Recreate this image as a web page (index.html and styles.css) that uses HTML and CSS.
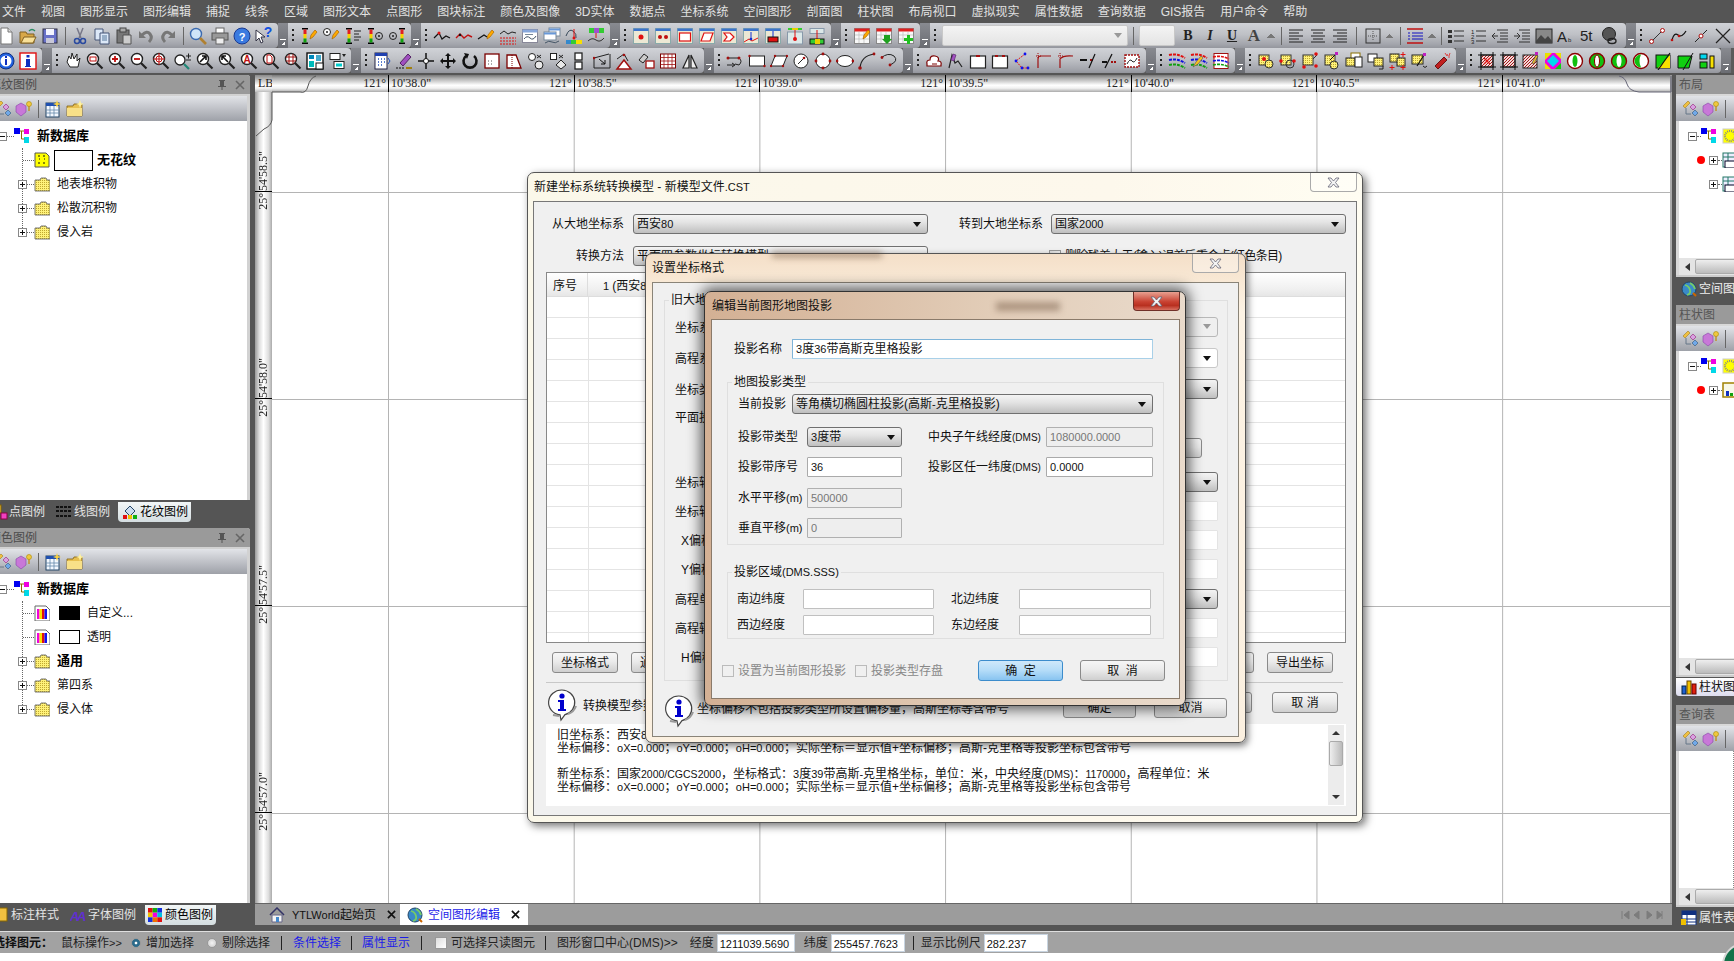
FILE: index.html
```html
<!DOCTYPE html>
<html lang="zh-CN">
<head>
<meta charset="utf-8">
<title>YTLWorld</title>
<link rel="stylesheet" href="styles.css">
</head>
<body>
<svg class="sprite" aria-hidden="true"><defs>
<pattern id="hy" width="2" height="2" patternUnits="userSpaceOnUse"><rect width="2" height="2" fill="#fff27a"/><rect width="1" height="1" fill="#c0a830"/></pattern>
<pattern id="hr" width="3" height="3" patternUnits="userSpaceOnUse"><rect width="3" height="3" fill="#f4d8d8"/><path d="M0 3L3 0" stroke="#a01818"/></pattern>
<g id="mag"><circle cx="7" cy="7" r="5.5" fill="#fff" stroke="#222" stroke-width="1.4"/><path d="M11 11l5.500 5.500" stroke="#222" stroke-width="2.200"/></g>
<g id="bar"><path d="M2 1h6v1.500H2zM2 15.500h6V17H2z" fill="#000"/><rect x="3.500" y="2.500" width="3" height="4.500" fill="#e02020"/><rect x="3.500" y="7" width="3" height="4.500" fill="#f8d000"/><rect x="3.500" y="11.500" width="3" height="4" fill="#10a010"/></g>
<g id="pen"><path d="M10 12l1-4 4-5 2 2-4 5z" fill="#fa0" stroke="#a60" stroke-width=".7"/></g>
<g id="tile"><rect x="1.500" y="1.500" width="15" height="15" fill="#ece8d4" stroke="#8aa"/><rect x="1.500" y="1.500" width="15" height="2.500" fill="#3c74cc"/></g>
<g id="win"><rect x="1.500" y="2.500" width="15" height="13" fill="#fff" stroke="#889"/><rect x="1.500" y="2.500" width="15" height="3" fill="#88a8dc"/></g>
<g id="cal"><rect x="1.500" y="1.500" width="15" height="15" fill="#f8f8f8" stroke="#888"/><path d="M1.500 3h15" stroke="#e02020" stroke-width="3"/><path d="M6 5v11M11 5v11M2 8h14M2 12h14" stroke="#bbb" stroke-width=".7"/></g>
<g id="yb"><rect x="2" y="3" width="10" height="10" fill="url(#hy)" stroke="#333"/></g>
<g id="ring"><circle cx="9" cy="9" r="7.500" fill="#fff" stroke="#8a0000" stroke-width="1.400"/></g>
<g id="dia"><path d="M1 6l5-5 2 2-5 5z" fill="#f0c040" stroke="#a08020" stroke-width=".6"/><path d="M8 7l3-3 3 3-3 3z" fill="#d8a0e0" stroke="#806" stroke-width=".5"/><path d="M10 13l3-3 3 3-3 3z" fill="#70a8e8" stroke="#246" stroke-width=".5"/><path d="M4 8v6h5" fill="none" stroke="#678"/></g>
<g id="gem"><path d="M6 3l5 3v6l-5 4-5-4V6z" fill="#c878d8" stroke="#84a" stroke-width=".6"/><circle cx="14" cy="4" r="2.500" fill="#f0c840" stroke="#a80" stroke-width=".6"/><path d="M14 6v5" stroke="#c09020" stroke-width="1.400"/></g>
<g id="ptb"><rect x="2" y="3" width="13" height="14" fill="#f4f8ff" stroke="#246"/><rect x="2" y="3" width="13" height="3" fill="#2050b0"/><path d="M6 6v11M10 6v11M2 10h13M2 13h13" stroke="#68a" stroke-width=".8"/><path d="M13 0l1 3 3 1-3 1-1 3-1-3-3-1 3-1z" fill="#f8d040"/></g>
<g id="pfo"><path d="M1 6h6l1-2h8v12H1z" fill="#e8c050" stroke="#806010" stroke-width=".8"/><path d="M1 8h15v8H1z" fill="#f8e088"/><path d="M14 0l1 3 3 1-3 1-1 3-1-3-3-1 3-1z" fill="#fff2a0"/></g>
<g id="root"><rect x="0" y="0" width="6" height="6" fill="#0000f0"/><rect x="10" y="1" width="5" height="5" fill="#f000e0"/><rect x="10" y="9" width="5" height="6" fill="#00d8e8"/><path d="M6 3h4M7.500 3v8h3" fill="none" stroke="#8a7000"/></g>
<g id="fold"><path d="M1 4h5l1-2h5l1 2h3v11H1z" fill="url(#hy)" stroke="#555" stroke-width=".8"/></g>
<g id="cbar"><path d="M1 1h11l4 4v11H1z" fill="#fff" stroke="#666"/><rect x="3" y="4" width="2.500" height="10" fill="#f000e0"/><rect x="5.500" y="4" width="2.500" height="10" fill="#f8e000"/><rect x="8" y="4" width="2.500" height="10" fill="#e01010"/><rect x="10.500" y="4" width="2.500" height="10" fill="#1010f0"/></g>
<g id="globe"><circle cx="8" cy="8" r="7" fill="#3a8ac8" stroke="#246"/><path d="M4 4q4 1 5 5t-3 5M9 2q4 2 5 6" fill="none" stroke="#7c6" stroke-width="1.800"/><path d="M12 12l3 3" stroke="#c60" stroke-width="2"/></g>
<g id="x"><path d="M2 1h3l2.500 3L10 1h3l-3.500 4.500L13 10h-3L7.500 7 5 10H2l3.500-4.500z" fill="#f4f4f4" stroke="#667" stroke-width=".8"/></g>
<g id="info"><path d="M16 2a13 12.500 0 0 1 3 24.600L15 32l-1-5.100A13 12.500 0 0 1 16 2z" fill="#fff" stroke="#444" stroke-width="1.200"/><path d="M7 27l6 1M22 26q6-2 8-8" stroke="#999" stroke-width="2" fill="none"/><circle cx="16" cy="8" r="2.600" fill="#00c"/><path d="M12 12h6v9h2v2h-8v-2h2v-7h-2z" fill="#00c"/></g>
</defs></svg>

<nav class="menu"><span>文件</span><span>视图</span><span>图形显示</span><span>图形编辑</span><span>捕捉</span><span>线条</span><span>区域</span><span>图形文本</span><span>点图形</span><span>图块标注</span><span>颜色及图像</span><span>3D实体</span><span>数据点</span><span>坐标系统</span><span>空间图形</span><span>剖面图</span><span>柱状图</span><span>布局视口</span><span>虚拟现实</span><span>属性数据</span><span>查询数据</span><span>GIS报告</span><span>用户命令</span><span>帮助</span></nav>

<div class="tbar">
 <div class="grp first">
  <svg class="i" viewBox="0 0 18 18"><path d="M4 1h7l4 4v12H4z" fill="#fff" stroke="#777"/><path d="M11 1v4h4" fill="#ddd" stroke="#777"/></svg>
  <svg class="i" viewBox="0 0 18 18"><path d="M1 5h6l1 2h7v9H1z" fill="#d8a848" stroke="#806020"/><path d="M2 16l3-6h12l-3 6z" fill="#f8e098" stroke="#806020"/><path d="M10 4q3-3 6 0" stroke="#2a8a60" fill="none" stroke-width="1.400"/></svg>
  <svg class="i" viewBox="0 0 18 18"><rect x="2" y="2" width="14" height="14" fill="#6870c8" stroke="#334"/><rect x="5" y="2" width="8" height="6" fill="#f4f4ff"/><rect x="5" y="11" width="8" height="5" fill="#c8c8d8"/></svg>
  <i class="sep"></i>
  <svg class="i" viewBox="0 0 18 18"><path d="M6 1l4 10M12 1L8 11" stroke="#778" stroke-width="1.500"/><circle cx="6" cy="14" r="2.500" fill="none" stroke="#2a4aa0" stroke-width="1.500"/><circle cx="12" cy="14" r="2.500" fill="none" stroke="#2a4aa0" stroke-width="1.500"/></svg>
  <svg class="i" viewBox="0 0 18 18"><path d="M2 2h8v11H2z" fill="#dce8f8" stroke="#457"/><path d="M7 6h9v11H7z" fill="#dce8f8" stroke="#457"/><path d="M9 9h5M9 11h5M9 13h5" stroke="#579"/></svg>
  <svg class="i" viewBox="0 0 18 18"><rect x="2" y="3" width="12" height="13" fill="#777" stroke="#444"/><rect x="5" y="1" width="6" height="4" fill="#aaa" stroke="#444"/><path d="M8 8h8v9H8z" fill="#ccc" stroke="#555"/></svg>
  <svg class="i" viewBox="0 0 18 18"><path d="M5 8q5-5 8-1 3 4-1 8" stroke="#777" stroke-width="3" fill="none"/><path d="M2 4v7h7z" fill="#777"/></svg>
  <svg class="i" viewBox="0 0 18 18"><path d="M13 8q-5-5-8-1-3 4 1 8" stroke="#777" stroke-width="3" fill="none"/><path d="M16 4v7H9z" fill="#777"/></svg>
  <i class="sep"></i>
  <svg class="i" viewBox="0 0 18 18"><circle cx="7" cy="7" r="5.500" fill="#cfe4f8" stroke="#3a6ab0" stroke-width="1.400"/><path d="M11 11l6 6" stroke="#b08030" stroke-width="2.600"/></svg>
  <svg class="i" viewBox="0 0 18 18"><rect x="5" y="1" width="8" height="6" fill="#fff" stroke="#666"/><rect x="1" y="6" width="16" height="7" fill="#999" stroke="#555"/><rect x="5" y="11" width="8" height="6" fill="#eee" stroke="#666"/></svg>
  <svg class="i" viewBox="0 0 18 18"><circle cx="9" cy="9" r="8" fill="#3a7ae0" stroke="#1a3a90"/><text x="9" y="13.500" class="svt w">?</text></svg>
  <svg class="i" viewBox="0 0 18 18"><path d="M1 3v11l3-3 2 5 2-1-2-5h4z" fill="#fff" stroke="#334"/><text x="13" y="10" class="svt bl">?</text></svg>
 </div><div class="more"></div>
 <div class="grp"><i class="gr"></i>
  <svg class="i" viewBox="0 0 18 18"><use href="#bar"/><use href="#pen"/></svg>
  <svg class="i" viewBox="0 0 18 18"><circle cx="5" cy="5" r="3.500" fill="#fff" stroke="#222"/><circle cx="5" cy="5" r="1" fill="#222"/><use href="#pen"/></svg>
  <svg class="i" viewBox="0 0 18 18"><use href="#bar"/><path d="M10 4h7M10 7h5M10 10h7M10 13h5" stroke="#222"/></svg>
  <svg class="i" viewBox="0 0 18 18"><use href="#bar"/><circle cx="13" cy="9" r="3.500" fill="none" stroke="#222"/><circle cx="13" cy="9" r="1" fill="#222"/></svg>
  <svg class="i" viewBox="0 0 18 18"><circle cx="5" cy="9" r="3.500" fill="none" stroke="#222"/><circle cx="5" cy="9" r="1" fill="#222"/><use href="#bar" x="9"/></svg>
 </div><div class="more"></div>
 <div class="grp"><i class="gr"></i>
  <svg class="i" viewBox="0 0 18 18"><path d="M1 11l5-5 3 6 4-3 4 2" fill="none" stroke="#111" stroke-width="1.200"/><circle cx="6" cy="6" r="1.500" fill="#e01010"/></svg>
  <svg class="i" viewBox="0 0 18 18"><path d="M1 11l4-4 4 4 4-3 4 2" fill="none" stroke="#c01010" stroke-width="1.400"/><circle cx="5" cy="8" r="1.200" fill="#111"/></svg>
  <svg class="i" viewBox="0 0 18 18"><path d="M1 12l6-4 3 2" fill="none" stroke="#111" stroke-width="1.200"/><use href="#pen"/></svg>
  <svg class="i" viewBox="0 0 18 18"><path d="M1 7l4-3 4 3 4-2 4 1" fill="none" stroke="#222"/><path d="M1 11h16M1 14h16M1 17h16" stroke="#e01010" stroke-dasharray="2 1"/></svg>
  <svg class="i" viewBox="0 0 18 18"><use href="#win"/><path d="M3 12q3-4 6-1t6-2" fill="none" stroke="#456"/><path d="M4 7.500h8" stroke="#789"/></svg>
  <svg class="i" viewBox="0 0 18 18"><rect x="6" y="1" width="11" height="8" fill="#fff" stroke="#789"/><path d="M6 2.500h11" stroke="#6898d8" stroke-width="2"/><rect x="1" y="5" width="12" height="8" fill="#fff" stroke="#789"/><path d="M1 6.500h12" stroke="#6898d8" stroke-width="2"/><path d="M2 16q4-3 7-1t7-1" fill="none" stroke="#456"/></svg>
  <svg class="i" viewBox="0 0 18 18"><path d="M1 9q3-8 7-5t3 7" fill="none" stroke="#345"/><path d="M9 2v9" stroke="#e01010"/><circle cx="9" cy="11" r="1.500" fill="#e01010"/><rect x="1" y="13" width="5" height="4" fill="#38c"/><rect x="6" y="13" width="5" height="4" fill="#3c3"/><rect x="11" y="13" width="6" height="4" fill="#f8e000"/></svg>
  <svg class="i" viewBox="0 0 18 18"><rect x="2" y="1" width="5" height="5" fill="#3c3"/><rect x="7" y="1" width="5" height="5" fill="#a050d0"/><rect x="12" y="1" width="5" height="5" fill="#3c3"/><path d="M9 6v5" stroke="#e01010"/><path d="M1 14q4-4 8-1t8-2" fill="none" stroke="#333"/></svg>
 </div><div class="more"></div>
 <div class="grp"><i class="gr"></i>
  <svg class="i" viewBox="0 0 18 18"><use href="#tile"/><circle cx="9" cy="10" r="2.500" fill="#e01010"/></svg>
  <svg class="i" viewBox="0 0 18 18"><use href="#tile"/><circle cx="6" cy="10" r="2" fill="#c01010"/><circle cx="12" cy="10" r="2" fill="#c01010"/></svg>
  <svg class="i" viewBox="0 0 18 18"><use href="#tile"/><rect x="3.500" y="6" width="11" height="8" fill="#fff" stroke="#e01010" stroke-width="1.200"/></svg>
  <svg class="i" viewBox="0 0 18 18"><use href="#tile"/><path d="M6 6h9l-3 8H3z" fill="#fff" stroke="#e01010" stroke-width="1.200"/></svg>
  <svg class="i" viewBox="0 0 18 18"><use href="#tile"/><path d="M4 6h6l4 4-4 4H4l3-4z" fill="#fff" stroke="#e01010" stroke-width="1.200"/></svg>
  <svg class="i" viewBox="0 0 18 18"><use href="#tile"/><path d="M2 15l5-3 3 2 6-3" fill="none" stroke="#e01010"/><path d="M9 5v8" stroke="#1030d0"/><circle cx="9" cy="12" r="1.300" fill="#1030d0"/></svg>
  <svg class="i" viewBox="0 0 18 18"><use href="#tile"/><path d="M9 4v6" stroke="#1030d0"/><rect x="4" y="10" width="10" height="5" fill="#e01010" stroke="#111"/></svg>
  <svg class="i" viewBox="0 0 18 18"><rect x="2" y="1" width="14" height="2" fill="#3c3"/><rect x="6" y="1" width="6" height="2" fill="#e8d000"/><rect x="1.500" y="5" width="15" height="12" fill="#dce8e8" stroke="#89a"/><path d="M9 3v9" stroke="#e01010"/><circle cx="9" cy="12" r="2" fill="#e01010"/></svg>
  <svg class="i" viewBox="0 0 18 18"><rect x="2" y="1.500" width="14" height="5" fill="#dce8e8" stroke="#89a"/><path d="M9 3v9" stroke="#e01010"/><rect x="2" y="12" width="14" height="5" fill="#3c3" stroke="#111"/><rect x="7" y="12" width="5" height="5" fill="#e8d000"/></svg>
 </div><div class="more"></div>
 <div class="grp"><i class="gr"></i>
  <svg class="i" viewBox="0 0 18 18"><use href="#cal"/><use href="#pen"/></svg>
  <svg class="i" viewBox="0 0 18 18"><use href="#cal"/><path d="M9 8h6v4h2l-5 5-5-5h2z" fill="#20a020"/></svg>
  <svg class="i" viewBox="0 0 18 18"><use href="#cal"/><path d="M10 8h3v3h3v3h-3v3h-3v-3H7v-3h3z" fill="#20c020"/></svg>
 </div><div class="more"></div>
 <div class="grp wide"><i class="gr"></i>
  <div class="tcombo big"><i class="arr lt"></i></div><i class="sep lg"></i>
  <div class="tcombo small"></div>
  <b class="fmt ser">B</b><i class="fmt it ser">I</i><u class="fmt ser">U</u><span class="fmt fa ser">A</span><i class="dd"></i><i class="sep"></i>
  <svg class="i" viewBox="0 0 18 18"><path d="M2 3h14M2 6h10M2 9h14M2 12h10M2 15h14" stroke="#222"/></svg>
  <svg class="i" viewBox="0 0 18 18"><path d="M2 3h14M4 6h10M2 9h14M4 12h10M2 15h14" stroke="#222"/></svg>
  <svg class="i" viewBox="0 0 18 18"><path d="M2 3h14M6 6h10M2 9h14M6 12h10M2 15h14" stroke="#222"/></svg>
  <i class="sep lg"></i>
  <svg class="i" viewBox="0 0 18 18"><rect x="2" y="2" width="14" height="14" fill="none" stroke="#333"/><path d="M9 4v10M4 9h10" stroke="#555" stroke-dasharray="1 1"/></svg><i class="dd"></i><i class="sep"></i>
  <svg class="i" viewBox="0 0 18 18"><path d="M1 2h16M1 16h16" stroke="#c01010" stroke-width="1.400"/><path d="M6 6h11M6 9h11M6 12h11" stroke="#1010c0"/><path d="M2 6h2M2 9h2M2 12h2" stroke="#1010c0"/></svg><i class="dd"></i><i class="sep sm"></i>
  <svg class="i" viewBox="0 0 18 18"><path d="M1 3h4v3H1zM1 8h4v3H1zM1 13h4v3H1z" fill="#333"/><path d="M7 4h10M7 9h10M7 14h10" stroke="#333"/></svg>
  <svg class="i" viewBox="0 0 18 18"><text x="2" y="7" class="svs">1</text><text x="2" y="12" class="svs">2</text><text x="2" y="17" class="svs">3</text><path d="M7 4h10M7 9h10M7 14h10" stroke="#333"/></svg>
  <svg class="i" viewBox="0 0 18 18"><path d="M6 3h11M9 6h8M9 9h8M9 12h8M6 15h11" stroke="#333"/><path d="M7 9H1M4 6L1 9l3 3" fill="none" stroke="#333"/></svg>
  <svg class="i" viewBox="0 0 18 18"><path d="M6 3h11M9 6h8M9 9h8M9 12h8M6 15h11" stroke="#333"/><path d="M1 9h6M4 6l3 3-3 3" fill="none" stroke="#333"/></svg>
  <svg class="i" viewBox="0 0 18 18"><rect x="1" y="2" width="16" height="14" fill="#888" stroke="#222"/><path d="M1 14l5-6 4 4 3-3 4 5v2H1z" fill="#444"/></svg>
  <svg class="i" viewBox="0 0 18 18"><text x="0" y="15" class="svl">A</text><text x="11" y="15" class="svs">b</text></svg>
  <svg class="i" viewBox="0 0 18 18"><text x="1" y="14" class="svl">5t</text></svg>
  <svg class="i" viewBox="0 0 18 18"><circle cx="8" cy="7" r="6.500" fill="#555" stroke="#222"/><ellipse cx="11" cy="14" rx="4" ry="2.500" fill="none" stroke="#222" stroke-width="1.400"/></svg>
 </div><div class="more"></div>
 <div class="grp"><i class="gr"></i>
  <svg class="i" viewBox="0 0 18 18"><path d="M4 14L14 4" stroke="#333"/><circle cx="3.500" cy="14.500" r="2" fill="#fff" stroke="#b01010"/><circle cx="14.500" cy="3.500" r="2" fill="#fff" stroke="#b01010"/></svg>
  <svg class="i" viewBox="0 0 18 18"><path d="M2 13q2-8 6-5t8-4" fill="none" stroke="#111" stroke-width="1.200"/><circle cx="2" cy="13" r="1.300" fill="#c01010"/><circle cx="9" cy="9" r="1.300" fill="#c01010"/></svg>
  <svg class="i" viewBox="0 0 18 18"><path d="M3 15L15 3" stroke="#222"/><circle cx="9" cy="9" r="2" fill="#fff" stroke="#b01010"/></svg>
  <svg class="i" viewBox="0 0 18 18"><path d="M2 2l14 14M16 2L2 16" stroke="#222" stroke-width="1.200"/></svg>
 </div>
</div>

<div class="tbar">
 <div class="grp first">
  <svg class="i" viewBox="0 0 18 18"><circle cx="9" cy="9" r="8" fill="#2060e0" stroke="#103080"/><circle cx="9" cy="9" r="5.500" fill="#fff"/><path d="M8 7h2v6H8zM8 4h2v2H8z" fill="#1030c0"/></svg>
  <svg class="i" viewBox="0 0 18 18"><rect x="1" y="1" width="16" height="16" fill="#fff" stroke="#e01010" stroke-width="1.400"/><path d="M7 7h4v7h1v1H6v-1h1zM7.500 3h3v2.500h-3z" fill="#1030c0"/></svg>
 </div><div class="more"></div>
 <div class="grp"><i class="gr"></i>
  <svg class="i" viewBox="0 0 18 18"><path d="M3 10l2-6 2 3 1-6 2 6 3-5 0 7 3-3-2 9H6z" fill="#fff" stroke="#222"/></svg>
  <svg class="i" viewBox="0 0 18 18"><use href="#mag"/><rect x="4" y="5" width="6" height="4" fill="none" stroke="#c01010"/></svg>
  <svg class="i" viewBox="0 0 18 18"><use href="#mag"/><path d="M4 7h6M7 4v6" stroke="#c01010" stroke-width="1.800"/></svg>
  <svg class="i" viewBox="0 0 18 18"><use href="#mag"/><path d="M4 7h6" stroke="#c01010" stroke-width="1.800"/></svg>
  <svg class="i" viewBox="0 0 18 18"><use href="#mag"/><path d="M1 7h12M7 1v12" stroke="#c01010"/><circle cx="7" cy="7" r="3" fill="none" stroke="#c01010"/></svg>
  <svg class="i" viewBox="0 0 18 18"><circle cx="6" cy="8" r="5" fill="#fff" stroke="#222" stroke-width="1.300"/><path d="M10 12l5 5" stroke="#287" stroke-width="2.200"/><path d="M12 4h5M14.500 1.500v5M12 8h5" stroke="#222"/></svg>
  <svg class="i" viewBox="0 0 18 18"><use href="#mag"/><path d="M4 10l6-6M6 4h4v4" fill="none" stroke="#111" stroke-width="1.600"/></svg>
  <svg class="i" viewBox="0 0 18 18"><use href="#mag"/><path d="M10 10L4 4M4 8V4h4" fill="none" stroke="#111" stroke-width="1.600"/></svg>
  <svg class="i" viewBox="0 0 18 18"><use href="#mag"/><text x="7" y="11" class="svt rd">A</text></svg>
  <svg class="i" viewBox="0 0 18 18"><use href="#mag"/><path d="M5 3h3l2 2v6H5z" fill="#fff" stroke="#c01010"/></svg>
  <svg class="i" viewBox="0 0 18 18"><use href="#mag"/><path d="M2 5h10M2 9h10M5 2v10M9 2v10" stroke="#a01010"/></svg>
  <svg class="i" viewBox="0 0 18 18"><rect x="1" y="1" width="16" height="16" fill="#fff" stroke="#111" stroke-width="1.400"/><rect x="3" y="3" width="5" height="4" fill="#08b" /><rect x="3" y="9" width="5" height="6" fill="#0bb"/><rect x="10" y="3" width="5" height="6" fill="#4ac"/><rect x="10" y="11" width="7" height="6" fill="#fff" stroke="#111"/></svg>
  <svg class="i" viewBox="0 0 18 18"><rect x="2" y="1.500" width="10" height="6" fill="#fff" stroke="#222"/><rect x="6" y="9.500" width="10" height="7" fill="#fff" stroke="#222"/><rect x="8" y="11.500" width="6" height="3" fill="#0cc"/><path d="M14 2l2 3 2-3z" fill="#222"/></svg>
 </div><div class="more"></div>
 <div class="grp"><i class="gr"></i>
  <svg class="i" viewBox="0 0 18 18"><rect x="2" y="1" width="12" height="16" fill="#fff" stroke="#224"/><rect x="2" y="1" width="12" height="3" fill="#2040b0"/><path d="M5 7h1M8 7h1M11 7h1M5 10h1M8 10h1M11 10h1M5 13h1M8 13h1" stroke="#2050c0" stroke-width="1.500"/><path d="M15 6l2 3-2 3" fill="none" stroke="#2050c0"/></svg>
  <svg class="i" viewBox="0 0 18 18"><path d="M5 11l8-9 3 3-8 9z" fill="#a050c0" stroke="#526"/><path d="M1 16h8" stroke="#111" stroke-dasharray="2 1"/><path d="M11 16h6" stroke="#a08010" stroke-width="2"/></svg>
  <svg class="i" viewBox="0 0 18 18"><path d="M9 1v16M1 9h16" stroke="#111" stroke-width="1.500"/><circle cx="9" cy="9" r="2.500" fill="#fff" stroke="#111"/></svg>
  <svg class="i" viewBox="0 0 18 18"><path d="M9 1l3 3h-2v4h4V6l3 3-3 3v-2h-4v4h2l-3 3-3-3h2v-4H4v2L1 9l3-3v2h4V4H6z" fill="#111"/></svg>
  <svg class="i" viewBox="0 0 18 18"><path d="M5 4a6.500 6.500 0 1 0 8 0" fill="none" stroke="#111" stroke-width="2.600"/><path d="M3 1l5 1-2 5z" fill="#111"/></svg>
  <svg class="i" viewBox="0 0 18 18"><rect x="2" y="2" width="14" height="14" fill="#fff" stroke="#7a0000" stroke-width="1.300"/><path d="M5 12h1M8 12h1M5 9h1M8 9h1" stroke="#555"/></svg>
  <svg class="i" viewBox="0 0 18 18"><path d="M2 3h9l5 13H2z" fill="#fff" stroke="#7a0000" stroke-width="1.300"/><path d="M7 3v13" stroke="#7a0000" stroke-dasharray="1 1"/></svg>
  <svg class="i" viewBox="0 0 18 18"><circle cx="5" cy="5" r="3.500" fill="#fff" stroke="#222"/><circle cx="12" cy="13" r="4" fill="#e8e8e8" stroke="#222"/><path d="M10 3l4 3M14 3l-4 3" stroke="#222"/></svg>
  <svg class="i" viewBox="0 0 18 18"><rect x="1.500" y="1.500" width="6" height="6" fill="#fff" stroke="#222"/><path d="M12 8l5 5-5 4-5-4z" fill="#e8e8e8" stroke="#222"/><path d="M10 3l4 3M14 3l-4 3" stroke="#222"/></svg>
  <svg class="i" viewBox="0 0 18 18"><rect x="4" y="1" width="7" height="7" fill="#fff" stroke="#222" stroke-width="1.300"/><rect x="4" y="10" width="7" height="7" fill="#fff" stroke="#222" stroke-width="1.300"/></svg>
  <svg class="i" viewBox="0 0 18 18"><path d="M1 6l15-4M1 16h16M1 6v10M17 2v14" fill="none" stroke="#222"/><path d="M6 7l6 5M12 8v4H8" fill="none" stroke="#111"/><circle cx="1" cy="6" r="1.300" fill="#a01010"/></svg>
  <svg class="i" viewBox="0 0 18 18"><path d="M9 8l7 9H2z" fill="#fff" stroke="#a01010" stroke-width="1.500"/><path d="M2 7l7-5 4 7" fill="none" stroke="#222"/><circle cx="9" cy="3" r="1.300" fill="#a01010"/></svg>
  <svg class="i" viewBox="0 0 18 18"><rect x="9" y="9" width="8" height="7" fill="#fff" stroke="#a01010" stroke-width="1.300"/><path d="M2 8l5-6 4 3-5 6z" fill="#ccc" stroke="#222"/></svg>
  <svg class="i" viewBox="0 0 18 18"><rect x="1.500" y="2" width="15" height="14" fill="#fff" stroke="#7a0000"/><path d="M5 2v14M9 2v14M13 2v14M1.500 5.500h15M1.500 9h15M1.500 12.500h15" stroke="#a01010" stroke-width=".8"/></svg>
  <svg class="i" viewBox="0 0 18 18"><path d="M8 3v13H2zM10 3v13h6z" fill="#eee" stroke="#222" stroke-width="1.200"/></svg>
 </div><div class="more"></div>
 <div class="grp"><i class="gr"></i>
  <svg class="i" viewBox="0 0 18 18"><path d="M1 6h12q4 3 0 7l-4-1" fill="none" stroke="#222"/><circle cx="2" cy="6" r="1.500" fill="#a01010"/><circle cx="13" cy="6" r="1.500" fill="#a01010"/><path d="M1 13h7M6 11l3 2-3 2" fill="none" stroke="#222"/></svg>
  <svg class="i" viewBox="0 0 18 18"><rect x="1.500" y="4" width="15" height="10" fill="#fff" stroke="#222"/><circle cx="1.500" cy="4" r="1.200" fill="#a01010"/><circle cx="16.500" cy="14" r="1.200" fill="#a01010"/></svg>
  <svg class="i" viewBox="0 0 18 18"><path d="M5 4h12l-4 10H1z" fill="#fff" stroke="#222"/><circle cx="5" cy="4" r="1.200" fill="#a01010"/><circle cx="17" cy="4" r="1.200" fill="#a01010"/><circle cx="1" cy="14" r="1.200" fill="#a01010"/><circle cx="13" cy="14" r="1.200" fill="#a01010"/></svg>
  <svg class="i" viewBox="0 0 18 18"><circle cx="9" cy="9" r="7" fill="#fff" stroke="#222"/><path d="M6 12l6-6" stroke="#222"/><circle cx="12" cy="6" r="1.300" fill="#a01010"/></svg>
  <svg class="i" viewBox="0 0 18 18"><circle cx="9" cy="9" r="7" fill="#fff" stroke="#222"/><circle cx="9" cy="2" r="1.400" fill="#a01010"/><circle cx="2" cy="9" r="1.400" fill="#a01010"/><circle cx="16" cy="9" r="1.400" fill="#a01010"/><circle cx="9" cy="16" r="1.400" fill="#a01010"/></svg>
  <svg class="i" viewBox="0 0 18 18"><ellipse cx="9" cy="9" rx="8" ry="5.500" fill="#fff" stroke="#222"/><circle cx="1" cy="9" r="1.400" fill="#a01010"/><circle cx="17" cy="9" r="1.400" fill="#a01010"/></svg>
  <svg class="i" viewBox="0 0 18 18"><path d="M2 16Q3 4 16 2" fill="none" stroke="#222" stroke-width="1.200"/><circle cx="2" cy="16" r="1.800" fill="#a01010"/><circle cx="16" cy="2" r="1.400" fill="#a01010"/></svg>
  <svg class="i" viewBox="0 0 18 18"><path d="M1 6q7-6 13-2 5 5-4 9" fill="none" stroke="#222"/><circle cx="2" cy="5.500" r="1.400" fill="#a01010"/><circle cx="10" cy="13" r="1.400" fill="#a01010"/></svg>
 </div><div class="more"></div>
 <div class="grp"><i class="gr"></i>
  <svg class="i" viewBox="0 0 18 18"><path d="M2 12q-1-4 3-4 0-5 5-4t3 5q4 0 3 4v1H2z" fill="#fff" stroke="#7a0000" stroke-width="1.200"/><path d="M7 12h5" stroke="#7a0000"/></svg>
  <svg class="i" viewBox="0 0 18 18"><path d="M2 16l3-13 3 8 3-2 4 6" fill="none" stroke="#222" stroke-width="1.200"/><path d="M4 8l2-6 3 1-2 6z" fill="#a050c0" stroke="#526" stroke-width=".6"/></svg>
  <svg class="i" viewBox="0 0 18 18"><rect x="1.500" y="4" width="15" height="12" fill="#fff" stroke="#222" stroke-width="1.200"/><path d="M7 4h4" stroke="#a01010" stroke-width="2"/></svg>
  <svg class="i" viewBox="0 0 18 18"><rect x="1.500" y="4" width="15" height="12" fill="#fff" stroke="#222" stroke-width="1.200"/><path d="M4 4h3M11 4h3" stroke="#a01010" stroke-width="2"/></svg>
  <svg class="i" viewBox="0 0 18 18"><path d="M12 2L3 9l6 7h6" fill="none" stroke="#e01010" stroke-dasharray="2 1"/><circle cx="12" cy="2" r="1.400" fill="#1010f0"/><circle cx="3" cy="9" r="1.400" fill="#1010f0"/><circle cx="9" cy="16" r="1.400" fill="#1010f0"/><circle cx="15" cy="16" r="1.400" fill="#1010f0"/></svg>
  <svg class="i" viewBox="0 0 18 18"><path d="M3 16V7q0-3 3-3h10" fill="none" stroke="#a01010" stroke-width="1.200"/><path d="M1 4h6M3 1v5" stroke="#a01010" stroke-dasharray="1 1"/></svg>
  <svg class="i" viewBox="0 0 18 18"><path d="M3 16V7q3-4 13-3" fill="none" stroke="#a01010" stroke-width="1.200"/><path d="M1 4h5M3 1v5" stroke="#a01010" stroke-dasharray="1 1"/></svg>
  <svg class="i" viewBox="0 0 18 18"><path d="M1 8h7" stroke="#111" stroke-width="2"/><path d="M11 8h3" stroke="#a01010" stroke-width="2"/><path d="M10 16l6-14" stroke="#111" stroke-width="1.200"/></svg>
  <svg class="i" viewBox="0 0 18 18"><path d="M1 10h5" stroke="#111" stroke-width="2"/><path d="M10 10h6" stroke="#a01010" stroke-width="2" stroke-dasharray="2 1"/><path d="M4 16l7-14" stroke="#111" stroke-width="1.200"/></svg>
  <svg class="i" viewBox="0 0 18 18"><rect x="2" y="3" width="14" height="12" fill="#fff" stroke="#a01010" stroke-width="1.400" stroke-dasharray="2 1"/><path d="M4 12q3-6 5-3t5-3" fill="none" stroke="#222"/></svg>
 </div><div class="more"></div>
 <div class="grp"><i class="gr"></i>
  <svg class="i" viewBox="0 0 18 18"><path d="M1 3q8-2 16 3" fill="none" stroke="#e01010" stroke-width="2" stroke-dasharray="3 1"/><path d="M1 8q8-2 16 3" fill="none" stroke="#1010e0" stroke-width="2" stroke-dasharray="3 1"/><path d="M1 13q8-2 16 3" fill="none" stroke="#10a010" stroke-width="2" stroke-dasharray="3 1"/></svg>
  <svg class="i" viewBox="0 0 18 18"><path d="M1 3q8-2 16 3" fill="none" stroke="#e01010" stroke-width="2" stroke-dasharray="3 1"/><path d="M1 8q8-2 16 3" fill="none" stroke="#1010e0" stroke-width="2" stroke-dasharray="3 1"/><path d="M1 13q8-2 16 3" fill="none" stroke="#10a010" stroke-width="2" stroke-dasharray="3 1"/><path d="M3 15l3-5 5-6 2 2-5 6z" fill="#f8c020" stroke="#555" stroke-width=".6"/></svg>
  <svg class="i" viewBox="0 0 18 18"><rect x="2" y="1.500" width="14" height="15" fill="#fff" stroke="#a01010"/><path d="M1 5q8-2 16 2" fill="none" stroke="#e01010" stroke-width="1.600" stroke-dasharray="3 1"/><path d="M1 9q8-2 16 2" fill="none" stroke="#1010e0" stroke-width="1.600" stroke-dasharray="3 1"/><path d="M1 13q8-2 16 2" fill="none" stroke="#10a010" stroke-width="1.600" stroke-dasharray="3 1"/></svg>
 </div><div class="more"></div>
 <div class="grp"><i class="gr"></i>
  <svg class="i" viewBox="0 0 18 18"><use href="#yb"/><circle cx="12" cy="12" r="4" fill="url(#hy)" stroke="#333"/><circle cx="7" cy="7" r="2" fill="#e01010"/></svg>
  <svg class="i" viewBox="0 0 18 18"><use href="#yb"/><circle cx="11" cy="12" r="4" fill="none" stroke="#333"/><circle cx="2" cy="9" r="1.800" fill="#e01010"/><circle cx="15" cy="9" r="1.800" fill="#e01010"/></svg>
  <svg class="i" viewBox="0 0 18 18"><use href="#yb"/><path d="M12 7l4-4" stroke="#333"/><circle cx="15" cy="2" r="1.800" fill="#e01010"/><circle cx="3" cy="15" r="1.800" fill="#e01010"/><circle cx="15" cy="14" r="1.800" fill="#e01010"/></svg>
  <svg class="i" viewBox="0 0 18 18"><use href="#yb"/><circle cx="11" cy="13" r="4" fill="url(#hy)" stroke="#333"/><path d="M7 8l6-6" stroke="#111"/><rect x="12" y="0" width="3" height="3" fill="#c020c0"/></svg>
  <svg class="i" viewBox="0 0 18 18"><rect x="6" y="1" width="9" height="8" fill="#fff" stroke="#8a7000"/><rect x="1" y="6" width="9" height="8" fill="url(#hy)" stroke="#222"/><rect x="10" y="5" width="7" height="10" fill="#fff" stroke="#222"/></svg>
  <svg class="i" viewBox="0 0 18 18"><rect x="1" y="2" width="9" height="8" fill="#fff" stroke="#222"/><rect x="7" y="6" width="9" height="8" fill="url(#hy)" stroke="#222"/><path d="M16 14v3h-4" fill="none" stroke="#222"/></svg>
  <svg class="i" viewBox="0 0 18 18"><rect x="1" y="2" width="9" height="8" fill="url(#hy)" stroke="#222"/><rect x="8" y="6" width="8" height="8" fill="url(#hy)" stroke="#222"/><path d="M14 0v5M11.500 2.500h5M3 13v5M.500 15.500h5M14 13v5M11.500 15.500h5" stroke="#e01010"/></svg>
  <svg class="i" viewBox="0 0 18 18"><rect x="1" y="3" width="11" height="9" fill="url(#hy)" stroke="#222"/><path d="M6 14l7-11" stroke="#111" stroke-width="1.200"/><rect x="12" y="1" width="3" height="3" fill="#c020c0"/><path d="M12 14q2 3 4 0" fill="none" stroke="#222"/></svg>
  <svg class="i" viewBox="0 0 18 18"><path d="M2 14l9-9 3 3-9 9z" fill="#c02020" stroke="#500" stroke-width=".8"/><path d="M14 2l1 2M17 1l-1 3M12 1l2 3M17 5h-2" stroke="#e04040"/></svg>
 </div><div class="more"></div>
 <div class="grp"><i class="gr"></i>
  <svg class="i" viewBox="0 0 18 18"><rect x="3" y="3" width="12" height="12" fill="url(#hr)" stroke="#222"/><path d="M0 3h18M0 15h18M3 0v18M15 0v18" stroke="#111"/><path d="M6 6l6 6M12 6l-6 6" stroke="#e01010" stroke-width="1.300"/></svg>
  <svg class="i" viewBox="0 0 18 18"><rect x="3" y="3" width="12" height="12" fill="url(#hr)" stroke="#222"/><path d="M0 3h18M0 15h18M3 0v18M15 0v18" stroke="#111"/></svg>
  <svg class="i" viewBox="0 0 18 18"><rect x="1" y="3" width="14" height="13" fill="url(#hr)" stroke="#222"/><path d="M10 11l4-8 2 1-4 8z" fill="#f0c030" stroke="#333" stroke-width=".6"/><rect x="13" y="0" width="3" height="3" fill="#c020c0"/></svg>
  <svg class="i" viewBox="0 0 18 18"><rect x="1" y="1" width="16" height="16" fill="#f000e0"/><path d="M1 1h7L1 8zM17 1v6l-6-6zM1 17v-6l6 6z" fill="#e8e000"/><path d="M11 17l6-6v6z" fill="#10d010"/><path d="M9 3l6 6-6 6-6-6z" fill="#00d8f0"/></svg>
  <svg class="i" viewBox="0 0 18 18"><use href="#ring"/><ellipse cx="9" cy="9" rx="2.500" ry="6" fill="#10c010"/></svg>
  <svg class="i" viewBox="0 0 18 18"><circle cx="9" cy="9" r="7.500" fill="#10c010" stroke="#8a0000" stroke-width="1.400"/><ellipse cx="9" cy="9" rx="2.500" ry="6" fill="#fff" stroke="#8a0000"/></svg>
  <svg class="i" viewBox="0 0 18 18"><circle cx="9" cy="9" r="7.500" fill="#10c010" stroke="#8a0000" stroke-width="1.400"/><ellipse cx="9" cy="9" rx="2.500" ry="6" fill="#fff"/></svg>
  <svg class="i" viewBox="0 0 18 18"><use href="#ring"/><path d="M9 2.500a6.500 6.500 0 0 0 0 13q-3-6.500 0-13z" fill="#10c010"/></svg>
  <svg class="i" viewBox="0 0 18 18"><rect x="2" y="3" width="14" height="13" fill="#10d010" stroke="#111"/><path d="M16 3v13H4z" fill="#f8e000"/><path d="M4 18L16 1" stroke="#111" stroke-width="1.200"/></svg>
  <svg class="i" viewBox="0 0 18 18"><path d="M2 4h14l-3 12H2z" fill="#10d010" stroke="#111"/><path d="M7 18L17 1" stroke="#111"/></svg>
  <svg class="i" viewBox="0 0 18 18"><rect x="2" y="2" width="7" height="5" fill="#00d8f0" stroke="#111"/><rect x="2" y="10" width="7" height="6" fill="#10d010" stroke="#111"/><rect x="12" y="4" width="4" height="12" fill="#f8e000" stroke="#111"/></svg>
 </div><div class="more"></div>
</div>

<main class="main">
 <aside class="ldock">
  <section class="panel p1">
   <header class="ptitle"><span class="ptext">花纹图例</span><span class="pin">
     <svg viewBox="0 0 12 12" class="pg"><path d="M3 1h6v1H8v5h2v1H6.500v3h-1V8H2V7h2V2H3z" fill="#555"/></svg>
     <svg viewBox="0 0 12 12" class="pg"><path d="M2 2l8 8M10 2l-8 8" stroke="#666" stroke-width="1.600"/></svg></span></header>
   <div class="ptools">
    <svg class="i" viewBox="0 0 18 18"><use href="#dia"/></svg><svg class="i" viewBox="0 0 18 18"><use href="#gem"/></svg><i class="sep"></i>
    <svg class="i" viewBox="0 0 18 18"><use href="#ptb"/></svg><svg class="i" viewBox="0 0 18 18"><use href="#pfo"/></svg>
   </div>
   <div class="tree">
    <div class="row rootrow"><i class="ex minus"></i><i class="conn c1"></i><svg class="ti" viewBox="0 0 16 16"><use href="#root"/></svg><strong class="rl">新数据库</strong></div>
    <div class="kids">
     <div class="row"><i class="conn c2"></i><svg class="ti" viewBox="0 0 16 16"><path d="M1 1h11l3 3v11H1z" fill="#ffff00" stroke="#555"/><path d="M4 4h2M9 4h2M4 11h2M9 11h2M5 7h1M10 7h1" stroke="#111"/></svg><i class="swbox"></i><strong class="rl">无花纹</strong></div>
     <div class="row"><i class="ex"></i><i class="conn c3"></i><svg class="ti" viewBox="0 0 16 16"><use href="#fold"/></svg><span class="lab">地表堆积物</span></div>
     <div class="row"><i class="ex"></i><i class="conn c3"></i><svg class="ti" viewBox="0 0 16 16"><use href="#fold"/></svg><span class="lab">松散沉积物</span></div>
     <div class="row"><i class="ex"></i><i class="conn c3"></i><svg class="ti" viewBox="0 0 16 16"><use href="#fold"/></svg><span class="lab">侵入岩</span></div>
    </div>
   </div>
  </section>
  <div class="dtabs d1">
   <div class="dtab"><svg class="ti" viewBox="0 0 16 16"><rect x="1" y="1" width="8" height="8" fill="#f0c040" stroke="#860"/><rect x="9" y="9" width="6" height="6" fill="#f040c0" stroke="#804"/></svg><span>点图例</span></div>
   <div class="dtab"><svg class="ti" viewBox="0 0 16 16"><path d="M0 3h16M0 7h16M0 12h16" stroke="#111" stroke-width="2" stroke-dasharray="3 1"/></svg><span>线图例</span></div>
   <div class="dtab on"><svg class="ti" viewBox="0 0 16 16"><path d="M3 7l5-5 5 5-5 5z" fill="#cde" stroke="#246"/><rect x="1" y="11" width="4" height="4" fill="#e01010"/><rect x="6" y="11" width="4" height="4" fill="#f0c000"/><rect x="11" y="11" width="4" height="4" fill="#10b010"/></svg><span>花纹图例</span></div>
  </div>
  <section class="panel p2">
   <header class="ptitle"><span class="ptext">颜色图例</span><span class="pin">
     <svg viewBox="0 0 12 12" class="pg"><path d="M3 1h6v1H8v5h2v1H6.500v3h-1V8H2V7h2V2H3z" fill="#555"/></svg>
     <svg viewBox="0 0 12 12" class="pg"><path d="M2 2l8 8M10 2l-8 8" stroke="#666" stroke-width="1.600"/></svg></span></header>
   <div class="ptools">
    <svg class="i" viewBox="0 0 18 18"><use href="#dia"/></svg><svg class="i" viewBox="0 0 18 18"><use href="#gem"/></svg><i class="sep"></i>
    <svg class="i" viewBox="0 0 18 18"><use href="#ptb"/></svg><svg class="i" viewBox="0 0 18 18"><use href="#pfo"/></svg>
   </div>
   <div class="tree">
    <div class="row rootrow"><i class="ex minus"></i><i class="conn c1"></i><svg class="ti" viewBox="0 0 16 16"><use href="#root"/></svg><strong class="rl">新数据库</strong></div>
    <div class="kids">
     <div class="row"><i class="conn c2"></i><svg class="ti" viewBox="0 0 16 16"><use href="#cbar"/></svg><i class="sw black"></i><span class="lab">自定义...</span></div>
     <div class="row"><i class="conn c2"></i><svg class="ti" viewBox="0 0 16 16"><use href="#cbar"/></svg><i class="sw"></i><span class="lab">透明</span></div>
     <div class="row"><i class="ex"></i><i class="conn c3"></i><svg class="ti" viewBox="0 0 16 16"><use href="#fold"/></svg><strong class="rl bf">通用</strong></div>
     <div class="row"><i class="ex"></i><i class="conn c3"></i><svg class="ti" viewBox="0 0 16 16"><use href="#fold"/></svg><span class="lab">第四系</span></div>
     <div class="row"><i class="ex"></i><i class="conn c3"></i><svg class="ti" viewBox="0 0 16 16"><use href="#fold"/></svg><span class="lab">侵入体</span></div>
    </div>
   </div>
  </section>
  <div class="dtabs d2">
   <div class="dtab"><svg class="ti" viewBox="0 0 16 16"><rect x="1" y="1" width="13" height="13" fill="#f0c040" stroke="#860"/></svg><span>标注样式</span></div>
   <div class="dtab"><svg class="ti" viewBox="0 0 16 16"><text x="0" y="14" class="svt pu">A</text><text x="7" y="14" class="svt pu">A</text></svg><span>字体图例</span></div>
   <div class="dtab on"><svg class="ti sq" viewBox="0 0 15 15"><rect width="5" height="5" fill="#e01010"/><rect x="5" width="5" height="5" fill="#10b010"/><rect x="10" width="5" height="5" fill="#1030e0"/><rect y="5" width="5" height="5" fill="#f0c000"/><rect x="5" y="5" width="5" height="5" fill="#f000e0"/><rect x="10" y="5" width="5" height="5" fill="#00c0e0"/><rect y="10" width="5" height="5" fill="#1030e0"/><rect x="5" y="10" width="5" height="5" fill="#f07000"/><rect x="10" y="10" width="5" height="5" fill="#e01010"/></svg><span>颜色图例</span></div>
  </div>
 </aside>

 <section class="map">
  <div class="cornerc">LB</div>
  <div class="rtop">
   <div class="tfirst">121°</div>
   <div class="tick"><span>10'38.0"</span><span>121°</span></div>
   <div class="tick"><span>10'38.5"</span><span>121°</span></div>
   <div class="tick"><span>10'39.0"</span><span>121°</span></div>
   <div class="tick"><span>10'39.5"</span><span>121°</span></div>
   <div class="tick"><span>10'40.0"</span><span>121°</span></div>
   <div class="tick"><span>10'40.5"</span><span>121°</span></div>
   <div class="tick"><span>10'41.0"</span></div>
  </div>
  <div class="rleft">
   <div class="lt first"><span>54'58.5"</span></div>
   <div class="lt"><span>25°</span><span>54'58.0"</span></div>
   <div class="lt"><span>25°</span><span>54'57.5"</span></div>
   <div class="lt"><span>25°</span><span>54'57.0"</span></div>
   <div class="lt last"><span>25°</span></div>
  </div>
  <div class="canvas"></div>
  <div class="doctabs">
   <div class="doc"><svg class="ti" viewBox="0 0 16 16"><path d="M1 8l7-7 7 7" fill="none" stroke="#336" stroke-width="1.500"/><path d="M3 8h10v7H3z" fill="#f4f4f4" stroke="#668"/><rect x="7" y="10" width="3" height="5" fill="#48c"/></svg><span class="l">YTLWorld</span><span>起始页</span><svg class="cx" viewBox="0 0 10 10"><path d="M1 1l8 8M9 1L1 9" stroke="#111" stroke-width="1.800"/></svg></div>
   <div class="doc on"><svg class="ti" viewBox="0 0 16 16"><use href="#globe"/></svg><span>空间图形编辑</span><svg class="cx" viewBox="0 0 10 10"><path d="M1 1l8 8M9 1L1 9" stroke="#111" stroke-width="1.800"/></svg></div>
   <svg class="nav" viewBox="0 0 42 10"><path d="M1 1v8M8 1v8L3 5zM18 1v8l-5-4zM26 1v8l5-4zM36 1v8l5-4zM41 1v8" fill="#7c7c7c" stroke="#7c7c7c"/></svg>
  </div>
  <svg class="curve cl" viewBox="0 0 62 62"><path d="M61 1q-6 2-8 10t-8 6H17v28q-1 6-8 9l-8 7" fill="none" stroke="#555"/></svg>
  <svg class="curve cr" viewBox="0 0 54 18"><path d="M1 1q6 1 8 8t12 8h32V1" fill="none" stroke="#667"/></svg>
 </section>

 <aside class="rdock">
  <section class="rp r1">
   <header class="ptitle"><span class="rtext">布局</span></header>
   <div class="ptools rt"><svg class="i" viewBox="0 0 18 18"><use href="#dia"/></svg><svg class="i" viewBox="0 0 18 18"><use href="#gem"/></svg><i class="sep"></i></div>
   <div class="rtree">
    <div class="rr"><i class="ex minus"></i><i class="conn c4"></i><svg class="ti" viewBox="0 0 16 16"><use href="#root"/></svg><svg class="ti" viewBox="0 0 16 16"><rect x="1" y="1" width="14" height="14" fill="#ffff00" stroke="#ccc"/><circle cx="8" cy="8" r="5" fill="none" stroke="#888" stroke-dasharray="1 1" stroke-width="2"/></svg></div>
    <div class="rr in"><i class="dot"></i><i class="ex"></i><i class="conn c4"></i><svg class="ti" viewBox="0 0 16 16"><rect x="1" y="1" width="14" height="14" fill="#eef" stroke="#276"/><path d="M1 5h14M6 1v14" stroke="#276"/><rect x="3" y="9" width="12" height="7" fill="#fff" stroke="#002"/></svg></div>
    <div class="rr in"><i class="nodot"></i><i class="ex"></i><i class="conn c4"></i><svg class="ti" viewBox="0 0 16 16"><rect x="1" y="1" width="14" height="14" fill="#eef" stroke="#276"/><path d="M1 5h14M6 1v14" stroke="#276"/><rect x="3" y="9" width="12" height="7" fill="#fff" stroke="#002"/></svg></div>
   </div>
   <div class="hs"><i class="arrl"></i><i class="thumb"></i></div>
  </section>
  <div class="rtab"><svg class="ti" viewBox="0 0 16 16"><use href="#globe"/></svg><span>空间图形</span></div>
  <section class="rp r2">
   <header class="ptitle"><span class="rtext">柱状图</span></header>
   <div class="ptools rt"><svg class="i" viewBox="0 0 18 18"><use href="#dia"/></svg><svg class="i" viewBox="0 0 18 18"><use href="#gem"/></svg><i class="sep"></i></div>
   <div class="rtree">
    <div class="rr"><i class="ex minus"></i><i class="conn c4"></i><svg class="ti" viewBox="0 0 16 16"><use href="#root"/></svg><svg class="ti" viewBox="0 0 16 16"><rect x="1" y="1" width="14" height="14" fill="#ffff00" stroke="#ccc"/><circle cx="8" cy="8" r="5" fill="none" stroke="#888" stroke-dasharray="1 1" stroke-width="2"/></svg></div>
    <div class="rr in"><i class="dot"></i><i class="ex"></i><i class="conn c4"></i><svg class="ti" viewBox="0 0 16 16"><rect x="1" y="1" width="14" height="14" fill="#f8f8e8" stroke="#a08000" stroke-width="1.500"/><rect x="4" y="9" width="3" height="5" fill="#1030c0"/><rect x="8" y="11" width="3" height="3" fill="#10a010"/></svg></div>
   </div>
   <div class="hs"><i class="arrl"></i><i class="thumb"></i></div>
  </section>
  <div class="rtab on"><svg class="ti" viewBox="0 0 16 16"><rect x="1" y="7" width="4" height="8" fill="#2060d0" stroke="#024"/><rect x="6" y="2" width="4" height="13" fill="#f0c000" stroke="#640"/><rect x="11" y="5" width="4" height="10" fill="#e02010" stroke="#600"/></svg><span>柱状图</span></div>
  <section class="rp r3">
   <header class="ptitle"><span class="rtext">查询表</span></header>
   <div class="ptools rt"><svg class="i" viewBox="0 0 18 18"><use href="#dia"/></svg><svg class="i" viewBox="0 0 18 18"><use href="#gem"/></svg><i class="sep"></i></div>
   <div class="rtree dotted"></div>
   <div class="hs"><i class="arrl"></i><i class="thumb"></i></div>
  </section>
  <div class="rtab"><svg class="ti" viewBox="0 0 16 16"><rect x="1" y="1" width="14" height="14" fill="#fff" stroke="#103080"/><rect x="1" y="1" width="14" height="4" fill="#103080"/><path d="M6 5v10M1 9h14M1 12h14" stroke="#103080"/><rect x="0" y="9" width="5" height="7" fill="#f0c000"/></svg><span>属性表</span></div>
 </aside>
</main>

<footer class="status">
 <strong class="sb">选择图元：</strong>
 <span>鼠标操作<span class="l">&gt;&gt;</span></span>
 <span class="si s1"><i class="radio on"></i>增加选择</span>
 <span class="si s2"><i class="radio"></i>剔除选择</span>
 <i class="vs"></i><a class="lnk">条件选择</a><i class="vs v2"></i><a class="lnk l2">属性显示</a><i class="vs"></i>
 <span class="si ck"><i class="check"></i>可选择只读图元</span><i class="vs"></i>
 <span class="swin">图形窗口中心(DMS)&gt;&gt;</span>
 <span class="si tight">经度<span class="sin w78 l">1211039.5690</span></span>
 <span class="si tight s3">纬度<span class="sin w74 l">255457.7623</span></span><i class="vs v3"></i>
 <span class="si tight s4">显示比例尺<span class="sin w64 l">282.237</span></span>
</footer>
<div class="strip"></div>
<div class="orb"></div>

<!-- dialog 1 -->
<div class="dlg d-a">
 <div class="dt"><span class="dtitle">新建坐标系统转换模型 - 新模型文件<span class="l">.CST</span></span><span class="close"><svg viewBox="0 0 15 11" class="xi"><use href="#x"/></svg></span></div>
 <div class="inner a-in">
  <div class="a-row">
   <label class="a-l1">从大地坐标系</label><div class="combo a-c"><span>西安<span class="l">80</span></span><i class="arr"></i></div>
   <label class="a-l2">转到大地坐标系</label><div class="combo a-c"><span>国家<span class="l">2000</span></span><i class="arr"></i></div>
  </div>
  <div class="a-row r2nd">
   <label class="a-l1">转换方法</label><div class="combo a-c"><span>平面四参数坐标转换模型</span><i class="arr"></i></div>
   <span class="a-chk"><i class="check"></i><span class="tight-t">删除残差大于(输入)误差后重合点(红色条目)</span></span>
  </div>
  <div class="tbl">
   <div class="thead"><span class="th1">序号</span><span class="th2"><span class="l">1 </span>(西安<span class="l">80)</span></span></div>
   <div class="tbody"></div>
  </div>
  <div class="a-btns">
   <button class="btn w66">坐标格式</button><button class="btn w66">通用设置</button>
   <button class="btn w66 push"></button><button class="btn w66 exp">导出坐标</button>
  </div>
  <div class="hr"></div>
  <div class="a-info">
   <svg class="inf" viewBox="0 0 32 34"><use href="#info"/></svg><span class="a-itext">转换模型参数</span>
   <button class="btn w66 btnb push"></button><button class="btn w66 btnc">取&nbsp;消</button>
  </div>
  <div class="memo">
   <div class="mtext">
    <p>旧坐标系：西安<span class="l">80</span></p>
    <p>坐标偏移：<span class="l">oX=0.000</span>；<span class="l">oY=0.000</span>；<span class="l">oH=0.000</span>；实际坐标＝显示值+坐标偏移；高斯-克里格等投影坐标包含带号</p>
    <p>&nbsp;</p>
    <p>新坐标系：国家<span class="xs">2000/CGCS2000</span>，坐标格式：<span class="l">3</span>度<span class="l">39</span>带高斯<span class="l">-</span>克里格坐标，单位：米，中央经度<span class="xs">(DMS)</span>：<span class="xs">1170000</span>，高程单位：米</p>
    <p>坐标偏移：<span class="l">oX=0.000</span>；<span class="l">oY=0.000</span>；<span class="l">oH=0.000</span>；实际坐标＝显示值+坐标偏移；高斯-克里格等投影坐标包含带号</p>
   </div>
   <div class="vsb"><i class="up"></i><i class="vth"></i><i class="down"></i></div>
  </div>
 </div>
</div>

<!-- dialog 2 -->
<div class="dlg d-b">
 <div class="dt"><span class="dtitle">设置坐标格式</span><i class="ghost g1"></i><span class="close"><svg viewBox="0 0 15 11" class="xi"><use href="#x"/></svg></span></div>
 <div class="inner b-in">
  <div class="group b-g">
   <span class="legend">旧大地坐标系</span>
   <div class="b-grid">
    <label>坐标系</label><div class="combo dis"><span></span><i class="arr lt"></i></div>
    <label>高程系</label><div class="combo wh"><span></span><i class="arr"></i></div>
    <label>坐标类</label><div class="combo"><span></span><i class="arr"></i></div>
    <label>平面投</label><div></div>
    <label></label><button class="btn mr16"></button>
    <label>坐标轴</label><div class="combo"><span></span><i class="arr"></i></div>
    <label>坐标轴</label><div class="inp nb"></div>
    <label class="ind">X偏移</label><div class="inp nb"></div>
    <label class="ind">Y偏移</label><div class="inp nb"></div>
    <label>高程单</label><div class="combo"><span></span><i class="arr"></i></div>
    <label>高程转</label><div class="inp nb"></div>
    <label class="ind">H偏移</label><div class="inp nb"></div>
   </div>
  </div>
  <div class="b-info">
   <svg class="inf" viewBox="0 0 32 34"><use href="#info"/></svg>
   <span class="b-itext">坐标偏移不包括投影类型所设置偏移量，高斯坐标等含带号</span>
   <button class="btn w73">确定</button><button class="btn w73">取消</button>
  </div>
 </div>
</div>

<!-- dialog 3 -->
<div class="dlg d-c">
 <div class="dt"><span class="dtitle">编辑当前图形地图投影</span><i class="ghost g2"></i><span class="close red"><svg viewBox="0 0 15 11" class="xi"><use href="#x"/></svg></span></div>
 <div class="inner c-in">
  <div class="c-name"><label class="w58">投影名称</label><div class="inp foc w361"><span class="l">3</span>度<span class="l">36</span>带高斯克里格投影</div></div>
  <div class="group c-g1">
   <span class="legend">地图投影类型</span>
   <div class="c-cur"><label class="w54">当前投影</label><div class="combo w361"><span>等角横切椭圆柱投影(高斯<span class="l">-</span>克里格投影)</span><i class="arr"></i></div></div>
   <div class="c-grid">
    <label>投影带类型</label><div class="combo"><span><span class="l">3</span>度带</span><i class="arr"></i></div>
    <label class="r2">中央子午线经度<span class="dm">(DMS)</span></label><div class="inp dis l">1080000.0000</div>
    <label>投影带序号</label><div class="inp l">36</div>
    <label class="r2">投影区任一纬度<span class="dm">(DMS)</span></label><div class="inp l">0.0000</div>
    <label>水平平移<span class="l">(m)</span></label><div class="inp dis l">500000</div>
    <span></span><span></span>
    <label>垂直平移<span class="l">(m)</span></label><div class="inp dis l">0</div>
   </div>
  </div>
  <div class="group c-g2">
   <span class="legend">投影区域<span class="l">(DMS.SSS)</span></span>
   <div class="c-grid2">
    <label>南边纬度</label><div class="inp"></div><label class="pl">北边纬度</label><div class="inp"></div>
    <label>西边经度</label><div class="inp"></div><label class="pl">东边经度</label><div class="inp"></div>
   </div>
  </div>
  <div class="c-foot">
   <span class="c-chk"><i class="check"></i>设置为当前图形投影</span>
   <span class="c-chk second"><i class="check"></i>投影类型存盘</span>
   <button class="btn prim w85">确&nbsp;&nbsp;定</button><button class="btn w85 gap17">取&nbsp;&nbsp;消</button>
  </div>
 </div>
</div>
</body>
</html>
```

FILE: styles.css
```css
*{box-sizing:border-box}
html,body{margin:0;padding:0;width:1734px;height:961px;overflow:hidden}
body{background:#555;font:12px/14px "Liberation Sans","Noto Sans CJK SC",sans-serif;color:#111;position:relative;display:flex;flex-direction:column}
.sprite{position:absolute;width:0;height:0}
.l{font-size:11px}
.xs{font-size:10.500px}
.dm{font-size:10px}
i{font-style:normal}
label{display:block}

/* menu */
.menu{height:23px;flex:none;display:flex;gap:15px;padding-left:2px;align-items:center;color:#e2e2e2;white-space:nowrap;overflow:hidden;background:#555}

/* toolbars */
.tbar{height:25px;flex:none;display:flex;background:#5b5b5b;overflow:hidden;white-space:nowrap}
.tbar + .tbar{margin-bottom:2px}
.grp{flex:none;display:flex;align-items:center;height:25px;padding-right:3px;border-radius:0 4px 4px 0;background:linear-gradient(#d0d2d7,#bfc1c6 45%,#a3a5ac 85%,#94969d)}
.grp.first{margin-left:-5px}
.grp.wide{padding-right:5px}
.i{flex:none;width:18px;height:18px;margin:0 2px}
.sep{flex:none;width:8px;height:18px;background:linear-gradient(#666,#666) center/1px 100% no-repeat}
.sep.lg{width:11px}
.sep.sm{width:7px}
.gr{flex:none;width:2px;height:14px;margin:0 4px;background:repeating-linear-gradient(#222 0 2px,transparent 2px 5px)}
.more{flex:none;width:10px;height:25px;background:linear-gradient(#888a90,#6a6c72);position:relative}
.more::after{content:"";position:absolute;left:2px;top:16px;width:6px;height:5px;border-top:1px solid #fff;background:linear-gradient(135deg,transparent 50%,#fff 50%) 1px 2px/4px 3px no-repeat}
.tcombo{flex:none;height:21px;background:linear-gradient(#f4f4f4,#e4e4e4);border:1px solid #c8c8c8;border-radius:2px;display:flex;align-items:center;justify-content:flex-end}
.tcombo.big{width:186px;margin-left:2px;padding-right:5px}
.tcombo.small{width:36px;margin-right:2px}
.fmt{flex:none;width:22px;text-align:center;font-size:14px;color:#222;font-style:normal}
.ser{font-family:"Liberation Serif",serif;font-weight:700}
.it{font-style:italic}
.fa{font-size:17px;color:#444}
.dd{flex:none;width:12px;height:4px;background:linear-gradient(135deg,transparent 50%,#777 50%) 2px 0/4px 4px no-repeat,linear-gradient(225deg,transparent 50%,#777 50%) 6px 0/4px 4px no-repeat}
.svt{font:700 11px "Liberation Sans",sans-serif;text-anchor:middle}
.svt.w{fill:#fff}.svt.bl{fill:#1050e0;font-size:14px}.svt.rd{fill:#c01010;font-size:10px}.svt.pu{fill:#6030d0;font-style:italic;font-size:13px;text-anchor:start}
.svs{font:6px "Liberation Sans",sans-serif;fill:#222}
.svl{font:15px "Liberation Sans",sans-serif;fill:#222}

/* main */
.main{flex:none;height:850px;display:flex}
.ldock{flex:none;width:250px;display:flex;flex-direction:column}
.panel{display:flex;flex-direction:column;background:#d2d2d2;padding-right:3px;border-radius:0 3px 0 0;overflow:hidden}
.p1{height:425px}
.p2{height:375px}
.ptitle{flex:none;height:19px;background:#9a9a9a;display:flex;align-items:center;color:#4c4c4c;overflow:hidden;white-space:nowrap;margin-right:-3px}
.ptext{margin-left:-11px;flex:1}
.pin{display:flex;gap:6px;margin-right:4px}
.pg{width:12px;height:12px}
.ptools{flex:none;height:25px;margin-top:2px;display:flex;align-items:center;background:linear-gradient(#e2e4e8,#c0c2c8 50%,#9ea1a8);overflow:hidden}
.ptools>.i:nth-child(-n+2){margin:0 1px}
.ptools>.i:first-child{margin-left:-5px}
.tree{flex:1;background:#fff;padding-top:3px;overflow:hidden;white-space:nowrap}
.row{height:24px;display:flex;align-items:center;position:relative}
.rootrow{margin-left:-2px}
.kids{margin-left:22px;border-left:1px dotted #666;position:relative}
.kids .row:last-child::after{content:"";position:absolute;left:-1px;top:13px;bottom:0;width:1px;background:#fff}
.ex{flex:none;width:9px;height:9px;border:1px solid #888;background:linear-gradient(#111,#111) center/5px 1px no-repeat,linear-gradient(#111,#111) center/1px 5px no-repeat,#fff;position:relative;z-index:1}
.ex.minus{background:linear-gradient(#111,#111) center/5px 1px no-repeat,#fff}
.kids .ex{margin-left:-5px}
.conn{flex:none;border-top:1px dotted #666}
.c1{width:7px}.c2{width:11px}.c3{width:7px}.c4{width:4px}
.ti{flex:none;width:16px;height:16px}
.rl{font-size:13px;margin-left:7px;font-weight:700;color:#000}
.lab{margin-left:7px}
.swbox{flex:none;width:39px;height:21px;border:1px solid #000;background:#fff;margin-left:4px}
.swbox + .rl{margin-left:4px}
.sw{flex:none;width:21px;height:14px;border:1px solid #000;background:#fff;margin-left:9px}
.sw.black{background:#000}
.dtabs{flex:none;display:flex;color:#e4e4e4;white-space:nowrap;overflow:hidden}
.d1{height:28px}
.d2{height:22px;padding-top:2px}
.dtab{display:flex;align-items:center;height:20px;gap:1px}
.d1 .dtab{margin-top:2px}
.d1 .dtab:first-child{margin-left:-8px}
.d1 .dtab:nth-child(2){margin-left:11px;gap:2px}
.d2 .dtab:first-child{margin-left:-7px;gap:2px}
.d2 .dtab:nth-child(2){margin-left:11px;gap:2px}
.dtab.on{margin-left:8px;padding:0 3px 0 4px;gap:2px;color:#000;background:linear-gradient(#f2f6f6,#d4dde0);border-radius:0 0 4px 4px}
.d2 .dtab.on{margin-left:9px;padding:0 3px;gap:3px}
.dtab .sq{width:14px;height:14px}

/* map */
.map{flex:none;width:1417px;margin-left:5px;margin-right:4px;display:grid;grid-template-columns:17px 1fr;grid-template-rows:17px 1fr 22px;position:relative;font-family:"Liberation Serif",serif;color:#222}
.cornerc{background:linear-gradient(#8a8a8a,#fff 62%,#eee 80%,#bbb);padding-left:3px;line-height:17px;font-size:12px;white-space:nowrap}
.rtop{display:flex;background:linear-gradient(#777,#aaa 18%,#fff 60%,#f0f0f0 78%,#aaa);border-right:2px solid #999;overflow:hidden;line-height:17px;white-space:nowrap}
.tfirst{flex:none;width:116px;text-align:right;padding-right:2px}
.tick{flex:none;width:185.700px;border-left:1px solid #000;display:flex;justify-content:space-between;padding:0 2px}
.rleft{display:flex;flex-direction:column;background:linear-gradient(90deg,#999,#ddd 25%,#fff 50%,#ddd 80%,#aaa);overflow:hidden;font-size:12px}
.lt{flex:none;height:207px;border-bottom:1px solid #000;display:flex;flex-direction:column;justify-content:space-between;align-items:center;padding-top:1px}
.lt.first{height:100px;justify-content:flex-end}
.lt.last{border:0}
.lt span{writing-mode:vertical-rl;transform:rotate(180deg);line-height:17px}
.canvas{background:linear-gradient(90deg,#b4b4b4 1px,transparent 1px) 116px 0/185.700px 100% repeat-x,linear-gradient(#b4b4b4 1px,transparent 1px) 0 100px/100% 207px repeat-y,#fff;border-right:2px solid #aaa}
.doctabs{grid-column:1/3;background:#9c9c9c;border-top:1px solid #666;display:flex;align-items:stretch;font-family:"Liberation Sans","Noto Sans CJK SC",sans-serif;padding-left:8px}
.doc{display:flex;align-items:center;height:21px;padding-left:6px;color:#111;white-space:nowrap}
.doc .ti{margin-right:7px}
.doc .cx{width:9px;height:9px;margin-left:11px}
.doc:first-child{width:137px}
.doc.on{background:#fff;width:128px;color:#1c1ce8;padding-left:7px}
.doc.on .ti{margin-right:5px}
.nav{width:42px;height:10px;margin:6px 9px 0 auto}
.curve{position:absolute;pointer-events:none}
.cl{left:0;top:0;width:62px;height:62px}
.cr{right:0;top:0;width:54px;height:18px}

/* right dock */
.rdock{flex:none;width:58px;display:flex;flex-direction:column;overflow:hidden;white-space:nowrap}
.rp{display:flex;flex-direction:column;background:#d8d8d8;padding-left:3px;border-radius:3px 0 0 0;flex:none;width:80px;border-bottom:2px solid #ccc}
.r1{height:202px}
.r2{height:372px}
.r3{height:202px}
.rp .ptitle{margin-left:-3px;margin-right:0}
.rtext{margin-left:3px;color:#555}
.rt{margin-left:-3px;padding-left:6px}
.ptools.rt>.i:first-child{margin-left:0}
.rtree{flex:1;background:#fff;padding-top:3px}
.rr{height:24px;display:flex;align-items:center;padding-left:9px}
.rr .ti + .ti{margin-left:5px}
.rr.in{padding-left:19px}
.dot{flex:none;width:8px;height:8px;border-radius:50%;background:#f00;margin-right:4px;margin-left:-1px}
.nodot{flex:none;width:8px;margin-right:4px;margin-left:-1px}
.dotted{background:linear-gradient(#888 50%,transparent 50%) 54px 0/1px 2px repeat-y,#fff}
.hs{flex:none;height:17px;display:flex;align-items:center;background:#e4e4e4;padding-left:6px}
.arrl{flex:none;width:0;height:0;border:4px solid transparent;border-right:5px solid #333;border-left:0}
.thumb{flex:none;width:60px;height:15px;margin-left:5px;background:linear-gradient(#eee,#bbb);border:1px solid #aaa;border-radius:2px}
.rtab{flex:none;height:24px;display:flex;align-items:center;gap:2px;color:#eee;padding-left:5px}
.rp + .rtab{margin-top:1px}
.rtab.on{color:#111;background:linear-gradient(#fff,#dde);height:18px;margin:1px 0 9px;border-radius:0 0 0 3px}
.r1 + .rtab{height:27px;padding-bottom:5px}
.r3 + .rtab{height:20px}

/* status */
.status{flex:none;height:22px;margin-top:6px;background:#a2a2a2;border-top:1px solid #dedede;display:flex;align-items:center;gap:11px;white-space:nowrap;color:#222;position:relative}
.sb{font-size:12px;margin-left:-7px;margin-right:-3px;color:#111}
.si{display:flex;align-items:center;gap:5px}
.si.tight{gap:3px}
.s1{margin-left:-2px}
.s2{margin-left:2px}
.v2{margin-left:-1px}
.l2{margin-left:-1px}
.si.ck{gap:4px;margin-left:2px;margin-right:-1px}
.swin{margin-right:1px}
.s3{margin-left:-2px}
.v3{margin-left:-3px}
.s4{margin-left:-4px}
.radio{flex:none;width:10px;height:10px;border-radius:50%;background:radial-gradient(#f4f4f4,#c8c8c8);border:1px solid #999}
.radio.on{background:radial-gradient(#fff 0 20%,#2b6a8a 30% 70%,#ddd 80%)}
.vs{flex:none;width:1px;height:14px;background:#222}
.lnk{color:#1c1ce8}
.check{flex:none;width:12px;height:12px;border:1px solid #999;background:linear-gradient(135deg,#ddd,#fff);display:inline-block}
.sin{height:18px;line-height:18px;background:#fff;border:1px solid #c8d4e0;padding-left:2px;color:#111;display:block}
.w78{width:78px}.w74{width:74px}.w64{width:64px}
.strip{flex:none;height:8px;background:#fff}
.orb{position:absolute;left:1722px;top:943px;width:44px;height:44px;border-radius:50%;background:#14724a;border:2px solid #d8d8d8}

/* dialogs */
.dlg{position:absolute;display:flex;flex-direction:column;border:1px solid #555;border-radius:7px;padding:0 5px 6px}
.d-a{left:527px;top:172px;width:836px;height:651px;background:linear-gradient(90deg,#fbf8ea,#fdf8ec 70%,#fffdf2);box-shadow:3px 3px 8px rgba(0,0,0,.55)}
.d-b{left:645px;top:253px;width:601px;height:490px;padding:0 6px 5px;background:linear-gradient(#f4dfc8,#fdf3e4 12%,#fbf0e0);box-shadow:2px 3px 7px rgba(0,0,0,.5)}
.d-c{left:704px;top:291px;width:482px;height:415px;padding:0 5px 6px 6px;border-color:#333;background:linear-gradient(90deg,#d3b094,#e2cdb8 60%,#e9dacb);box-shadow:0 0 14px 3px rgba(0,0,0,.65)}
.dt{flex:none;height:28px;display:flex;position:relative}
.d-c .dt{height:27px}
.dtitle{line-height:28px;white-space:nowrap;margin-left:1px}
.d-b .dtitle{margin-left:0}
.close{margin-left:auto;flex:none;width:47px;height:19px;border:1px solid #aaa;border-top:0;border-radius:0 0 4px 4px;background:rgba(255,255,255,.35);display:flex;align-items:center;justify-content:center}
.close.red{background:linear-gradient(#e8a090,#c84030 55%,#b83020 75%,#d87060);border-color:#703028}
.xi{width:15px;height:11px}
.ghost{position:absolute;height:9px;background:rgba(90,60,40,.38);filter:blur(3px)}
.g1{left:120px;top:-3px;width:110px;height:7px}
.g2{left:285px;top:10px;width:64px}
.inner{flex:1;min-height:0;background:#f0f0f0;border:1px solid #777;display:flex;flex-direction:column}
.d-b .inner{border-color:#8a8478}
.d-c .inner{border-color:#8a7a6a}
.combo{height:20px;border:1px solid #707070;border-radius:3px;background:linear-gradient(#f4f4f4,#e4e4e4 40%,#bfbfbf);display:flex;align-items:center;justify-content:space-between;padding:0 6px 0 3px;white-space:nowrap;overflow:hidden}
.combo.dis{background:#efefef;border-color:#b8b8b8}
.combo.wh{background:#fff;border-color:#c8c8c8}
.arr{flex:none;width:0;height:0;border:4px solid transparent;border-top:5px solid #111;border-bottom:0}
.arr.lt{border-top-color:#999}
.inp{height:20px;line-height:18px;border:1px solid #aaa;background:#fff;padding-left:3px;white-space:nowrap;color:#111;border-radius:1px}
.inp.nb{border-color:#e4e4e4}
.inp.foc{border-color:#7fb4d8 #a8d0e8 #a8d0e8 #7fb4d8}
.inp.dis{background:#eee;border-color:#b0b0b0;color:#777}
.btn{font:inherit;height:21px;padding:0;border:1px solid #8a8a8a;border-radius:3px;background:linear-gradient(#f6f6f6,#ebebeb 45%,#cfcfcf);color:#111;flex:none}
.btn.prim{border-color:#3c8ccc;background:linear-gradient(#cfe8fa,#b4dcf8 50%,#88c4f0)}
.group{border:1px solid #dfdfdf;display:flex;flex-direction:column}
.legend{margin:-8px 0 0 4px;padding:0 2px;line-height:14px;background:#f0f0f0;width:fit-content;white-space:nowrap}

/* dialog 1 */
.a-in{padding:12px 10px 0 12px}
.a-row{display:flex;height:20px;flex:none;line-height:20px}
.r2nd{margin-top:12px}
.a-l1{width:78px;text-align:right;margin-right:9px}
.a-l2{width:115px;text-align:right;margin-right:8px}
.a-c{width:295px;flex:none}
.a-chk{margin-left:121px;display:flex;align-items:center;gap:4px;white-space:nowrap}
.tight-t{letter-spacing:-.7px}
.tbl{flex:none;margin-top:6px;height:371px;background:#fff;border:1px solid #888;display:flex;flex-direction:column}
.thead{flex:none;height:24px;display:flex;line-height:26px;background:linear-gradient(#fff,#f0f0f0 70%,#e6e6e6);border-bottom:1px solid #ddd}
.th1{width:41px;padding-left:6px;border-right:1px solid #ddd}
.th2{padding-left:15px}
.tbody{flex:1;background:linear-gradient(#e4e4e4 1px,transparent 1px) 0 20px/100% 21px repeat-y,linear-gradient(90deg,#e4e4e4 1px,transparent 1px) 41px 0/1px 100% no-repeat,#fff}
.a-btns{flex:none;margin-top:9px;display:flex;padding-left:6px;gap:13px}
.w66{width:66px}
.push{margin-left:auto}
.exp{margin-right:13px}
.hr{flex:none;height:1px;margin:9px 3px 0 0;background:#c8c8c8}
.a-info{flex:none;margin-top:5px;height:32px;display:flex;align-items:flex-start}
.inf{flex:none;width:32px;height:34px}
.a-itext{margin:11px 0 0 5px;white-space:nowrap}
.btnb{margin-top:4px}
.btnc{margin:4px 8px 0 20px}
.memo{flex:none;margin-top:4px;height:82px;background:#fff;display:flex;justify-content:space-between;overflow:hidden}
.mtext{padding:5px 0 0 11px;line-height:13px;white-space:nowrap}
.mtext p{margin:0}
.vsb{flex:none;width:16px;margin:1px 2px 1px 0;background:#ececec;display:flex;flex-direction:column;align-items:center;padding:6px 0}
.up{width:0;height:0;border:4px solid transparent;border-bottom:4px solid #333;border-top:0}
.vth{width:14px;height:25px;margin-top:6px;background:linear-gradient(90deg,#eee,#bbb);border:1px solid #aaa;border-radius:2px}
.down{width:0;height:0;border:4px solid transparent;border-top:4px solid #333;border-bottom:0;margin-top:auto}

/* dialog 2 */
.b-g{margin:17px 10px 0 11px;height:381px;flex:none}
.b-grid{display:grid;grid-template-columns:45px 1fr;grid-template-rows:31px 31px 28px 31px 34px 29px 29px 29px 30px 29px 29px 20px;margin-top:10px;padding:0 9px 0 10px;align-items:start}
.b-grid label{line-height:22px;white-space:nowrap}
.b-grid .ind{padding-left:6px}
.mr16{margin-right:16px;height:20px}
.b-info{flex:none;display:flex;margin-top:13px;padding-left:10px;align-items:flex-start}
.b-itext{flex:1;margin:8px 0 0 2px;white-space:nowrap;overflow:hidden}
.w73{width:73px;margin:4px 11px 0 0;height:20px}
.w73 + .w73{margin-left:7px}

/* dialog 3 */
.c-name{display:flex;margin:19px 0 0 22px;line-height:20px;flex:none}
.w58{width:58px;flex:none}
.w54{width:54px;flex:none}
.w361{width:361px;flex:none}
.c-g1{flex:none;margin:23px 15px 0 15px;height:163px}
.c-cur{display:flex;margin:5px 0 0 10px;line-height:20px}
.c-grid{display:grid;grid-template-columns:69px 95px 144px 107px;grid-auto-rows:20px;row-gap:10.300px;margin:13px 0 0 10px;line-height:20px;white-space:nowrap}
.c-grid .inp,.c-grid .combo{line-height:18px}
.c-grid .r2{padding-left:26px}
.c-g2{flex:none;margin:27px 15px 0 15px;height:67px}
.c-grid2{display:grid;grid-template-columns:66px 131px 85px 132px;grid-auto-rows:20px;row-gap:6px;margin:10px 0 0 9px;line-height:20px}
.c-grid2 .pl{padding-left:17px}
.c-grid2 .inp{border-color:#c0c0c0}
.c-foot{flex:none;display:flex;align-items:center;margin:21px 0 0 10px;height:21px;color:#888;white-space:nowrap}
.c-chk{display:flex;align-items:center;gap:4px}
.c-chk .check{background:#f0f0f0;border-color:#bbb}
.second{margin-left:9px}
.w85{width:85px}
.prim{margin-left:35px}
.gap17{margin-left:17px}
```
